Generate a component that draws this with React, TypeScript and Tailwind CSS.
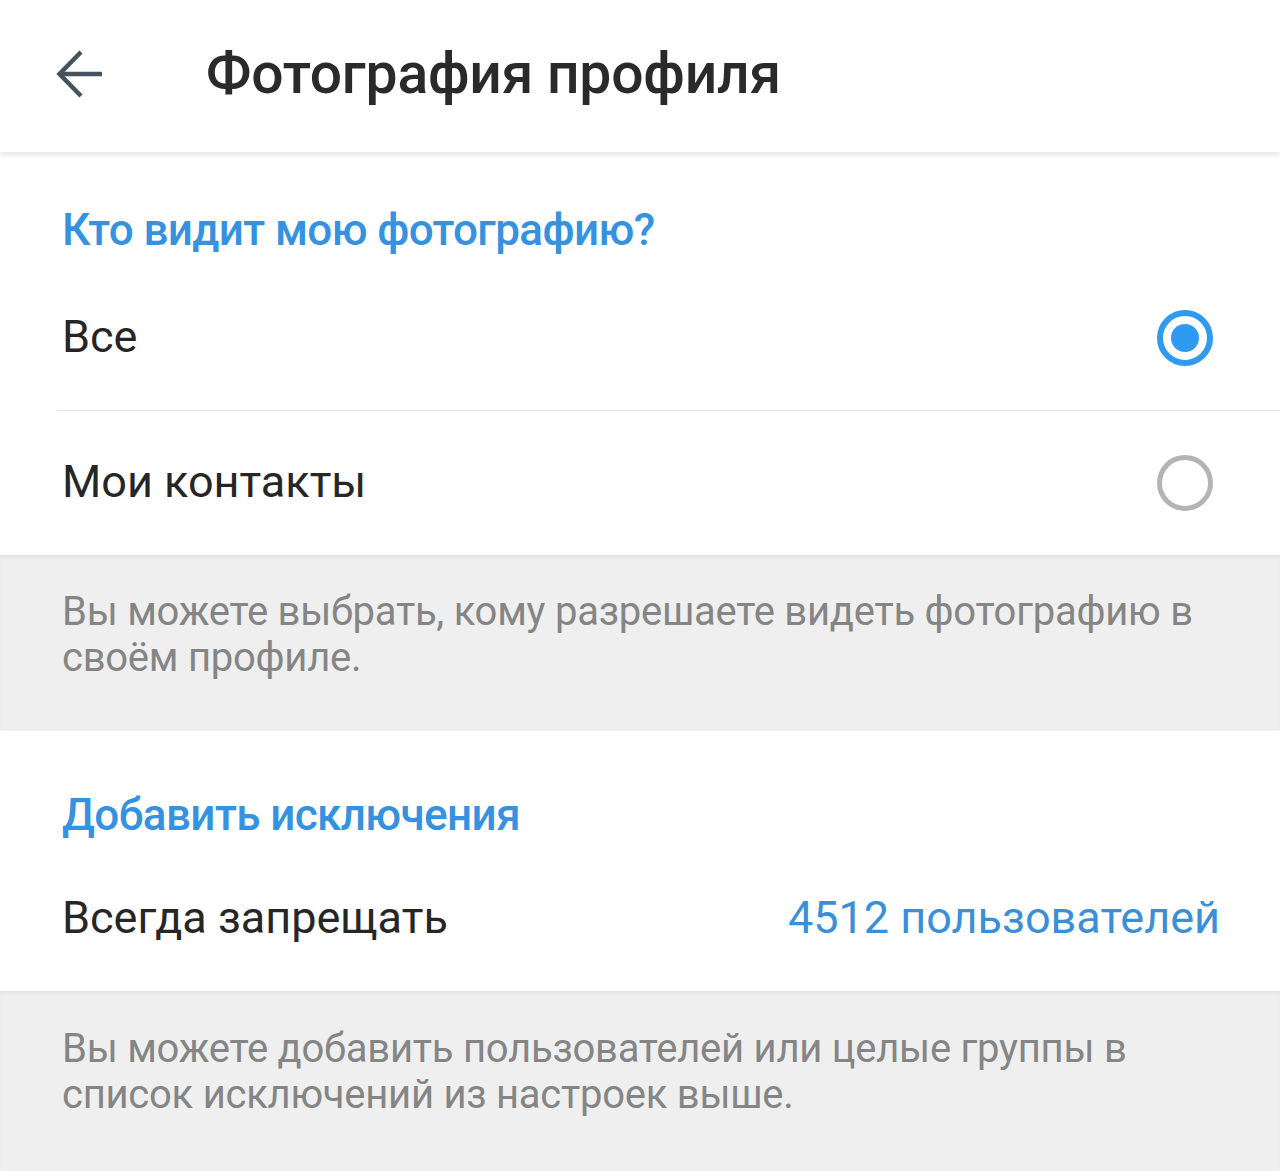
import React, { useState } from "react";

const BackArrow = () => (
  <svg width="48" height="48" viewBox="0 0 48 48" fill="none" stroke="#44535e" strokeWidth="4.5" strokeLinecap="butt">
    <path d="M46 24H4" />
    <path d="M25 2L3.5 24L25 46" />
  </svg>
);

const Radio = ({ checked }: { checked: boolean }) =>
  checked ? (
    <div className="w-[56px] h-[56px] rounded-full border-[6px] border-[#2e9af0] flex items-center justify-center">
      <div className="w-[28px] h-[28px] rounded-full bg-[#2e9af0]" />
    </div>
  ) : (
    <div className="w-[56px] h-[56px] rounded-full border-[5px] border-[#b4b4b4]" />
  );

const App = () => {
  const [who, setWho] = useState("all");

  return (
    <div className="min-h-[1171px] bg-white font-['Roboto',sans-serif]">
      {/* toolbar */}
      <div className="relative z-10 h-[152px] flex items-center bg-white shadow-[0_2px_6px_rgba(0,0,0,0.13)]">
        <div className="ml-[56px] mt-[-4px]">
          <BackArrow />
        </div>
        <h1 className="ml-[102px] mt-[-6px] text-[57px] leading-none font-medium text-[#2a2a2a] tracking-[-0.2px]">
          Фотография профиля
        </h1>
      </div>

      {/* who sees */}
      <div className="bg-white">
        <div className="h-[114px] pl-[62px] pt-[50px]">
          <h2 className="text-[44px] leading-[56px] font-medium text-[#3592e0] tracking-[-0.6px]">Кто видит мою фотографию?</h2>
        </div>
        <button onClick={() => setWho("all")} className="w-full h-[144px] flex items-center justify-between pl-[62px] pr-[67px] text-left">
          <span className="text-[45px] text-[#262626] mt-[-2px]">Все</span>
          <Radio checked={who === "all"} />
        </button>
        <div className="ml-[57px] h-px bg-[#e5e5e5]" />
        <button onClick={() => setWho("contacts")} className="w-full h-[144px] flex items-center justify-between pl-[62px] pr-[67px] text-left">
          <span className="text-[45px] text-[#262626] mt-[-2px]">Мои контакты</span>
          <Radio checked={who === "contacts"} />
        </button>
      </div>

      <div className="h-[176px] bg-[#efefef] shadow-[inset_0_3px_3px_-1px_rgba(0,0,0,0.06)] pl-[62px] pr-[60px] pt-[34px]">
        <p className="text-[40px] leading-[46px] text-[#858585] tracking-[-0.25px]">
          Вы можете выбрать, кому разрешаете видеть фотографию в своём профиле.
        </p>
      </div>

      {/* exceptions */}
      <div className="bg-white">
        <div className="h-[116px] pl-[62px] pt-[56px]">
          <h2 className="text-[44px] leading-[56px] font-medium text-[#3592e0] tracking-[-0.6px]">Добавить исключения</h2>
        </div>
        <div className="h-[144px] flex items-center justify-between pl-[62px] pr-[60px]">
          <span className="text-[45px] text-[#262626] mt-[-2px]">Всегда запрещать</span>
          <span className="text-[45px] text-[#3a8fd9] mt-[-2px]">4512 пользователей</span>
        </div>
      </div>

      <div className="h-[180px] bg-[#efefef] shadow-[inset_0_3px_3px_-1px_rgba(0,0,0,0.06)] pl-[62px] pr-[60px] pt-[35px]">
        <p className="text-[40px] leading-[46px] text-[#858585] tracking-[-0.25px]">
          Вы можете добавить пользователей или целые группы в список исключений из настроек выше.
        </p>
      </div>
    </div>
  );
};

export default App;
